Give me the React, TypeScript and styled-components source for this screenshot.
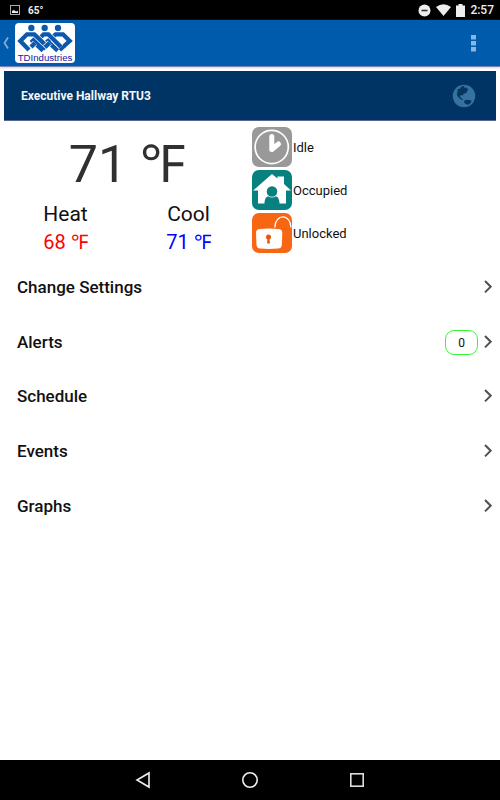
import React from "react";
import styled, { createGlobalStyle } from "styled-components";

const Global = createGlobalStyle`
  * { box-sizing: border-box; }
  body { margin: 0; background: #fff; font-family: Roboto, "Liberation Sans", sans-serif; color: #111; }
  button { font: inherit; color: inherit; background: none; border: 0; padding: 0; cursor: pointer; }
  svg { display: block; }
`;

const Page = styled.div`
  display: flex;
  flex-direction: column;
  min-height: 100vh;
`;

const StatusBar = styled.div`
  display: flex;
  align-items: center;
  height: 20px;
  padding: 0 6px 0 10px;
  background: #000;
  color: #eee;
`;

const Outside = styled.span`
  margin-left: 8px;
  font-size: 10px;
  font-weight: 700;
`;

const StatusIcons = styled.div`
  display: flex;
  align-items: center;
  gap: 5px;
  margin-left: auto;
`;

const Clock = styled.time`
  font-size: 12px;
  font-weight: 500;
`;

const AppBar = styled.header`
  display: flex;
  align-items: center;
  height: 47px;
  padding: 0 20px 0 2px;
  background: #005bac;
  border-bottom: 1px solid #7c80b8;
  box-shadow: 0 1px 2px #ccd3dc;
`;

const BackButton = styled.button`
  width: 13px;
  height: 40px;
`;

const MenuButton = styled.button`
  margin-left: auto;
  width: 13px;
  height: 30px;
  svg { margin: 0 auto; }
`;

const DeviceBar = styled.section`
  display: flex;
  align-items: center;
  justify-content: space-between;
  height: 50px;
  margin: 4px 4px 0;
  padding: 0 20px 0 17px;
  background: #003464;
  border-bottom: 1px solid #5d6390;
`;

const DeviceName = styled.h1`
  margin: 0;
  font-size: 12px;
  font-weight: 700;
  color: #f4f6fa;
`;

const Summary = styled.section`
  display: grid;
  grid-template-columns: 1fr 1fr;
  height: 139px;
  padding: 6px 4px 0;
`;

const Readings = styled.div`
  display: grid;
  grid-template-columns: 1fr 1fr;
  grid-template-rows: 73px 28px 28px;
  text-align: center;
`;

const Current = styled.div`
  grid-column: 1 / -1;
  font-size: 52px;
  line-height: 76px;
  color: #303030;
`;

const Setpoint = styled.div<{ $color?: string }>`
  font-size: ${(p) => (p.$color ? 20 : 21)}px;
  line-height: 28px;
  color: ${(p) => p.$color ?? "#111"};
`;

const States = styled.ul`
  display: flex;
  flex-direction: column;
  gap: 3px;
  margin: 0;
  padding: 0 0 0 2px;
  list-style: none;
`;

const State = styled.li`
  display: flex;
  align-items: center;
  gap: 1px;
  font-size: 13px;
`;

const Menu = styled.nav`
  display: grid;
  grid-auto-rows: 1fr;
  min-height: 273px;
`;

const MenuRow = styled.button`
  display: flex;
  align-items: center;
  gap: 6px;
  padding: 0 8px 0 17px;
  font-size: 17px;
  font-weight: 500;
  text-align: left;
`;

const RowLabel = styled.span`
  flex: 1;
`;

const Badge = styled.span`
  width: 33px;
  height: 25px;
  margin-top: 2px;
  border: 1px solid #3bf53b;
  border-radius: 9px;
  font-size: 12px;
  font-weight: 400;
  line-height: 24px;
  text-align: center;
`;

const SystemNav = styled.nav`
  display: flex;
  align-items: center;
  justify-content: center;
  gap: 83px;
  height: 40px;
  margin-top: auto;
  background: #000;
`;

const NavButton = styled.button`
  width: 24px;
  height: 24px;
`;

const logoLinks = [
  "M84 83L53 54L60 47L92 78",
  "M128 83L98 55L122 34H144L164 54L134 81",
  "M72 48L86 34H100L138 72",
  "M42 81L16 54L36 34H58L98 72",
  "M48 72L60 60",
  "M90 73L104 59",
];

const Logo = () => (
  <svg width="60" height="40" viewBox="0 0 180 120" role="img" aria-label="TDIndustries">
    <rect width="180" height="120" rx="12" fill="#fff" />
    <g fill="#0b58ad">
      <circle cx="49" cy="15" r="9.5" />
      <circle cx="89" cy="15" r="9.5" />
      <circle cx="129" cy="15" r="9.5" />
    </g>
    {logoLinks.map((d) => (
      <g key={d} fill="none">
        <path d={d} stroke="#fff" strokeWidth="17" />
        <path d={d} stroke="#0b58ad" strokeWidth="13" />
      </g>
    ))}
    <text x="90" y="113" textAnchor="middle" fontFamily="Liberation Sans, sans-serif" fontSize="29" fill="#1717a5">TDIndustries</text>
  </svg>
);

const ClockIcon = () => (
  <svg width="40" height="40" viewBox="0 0 40 40" aria-hidden="true">
    <rect width="40" height="40" rx="7" fill="#999" />
    <circle cx="19.7" cy="20" r="16.6" fill="none" stroke="#fff" strokeWidth="1.7" />
    <path d="M19.8 9.5V22.5L26.5 17" fill="none" stroke="#fff" strokeWidth="5" strokeLinecap="round" strokeLinejoin="round" />
  </svg>
);

const HomeIcon = () => (
  <svg width="40" height="40" viewBox="0 0 40 40" aria-hidden="true">
    <rect width="40" height="40" rx="7" fill="#078080" />
    <path d="M20 4L25.5 8.5V6.5H32V14L39 20.5H34V33.5H6V20.5H1Z" fill="#fff" />
    <circle cx="20" cy="21.5" r="5.3" fill="#078080" />
    <path d="M12.5 34C12.5 29 14 26.5 16.5 26.5Q20 28.5 23.5 26.5C26 26.5 27.5 29 27.5 34Z" fill="#078080" />
  </svg>
);

const UnlockIcon = () => (
  <svg width="40" height="40" viewBox="0 0 40 40" aria-hidden="true">
    <rect width="40" height="40" rx="7" fill="#f76612" />
    <path d="M22.8 14.5C23.5 -0.2 38.9 0.8 38.9 14.5" fill="none" stroke="#fff" strokeWidth="1.3" />
    <path d="M8 16Q17 15 26 16Q30.3 16 30.3 20L29.8 32Q29.5 35.5 26 35.5Q17 36.3 8 35.5Q5 35.5 4.5 32L4 20Q4 16 8 16Z" fill="#fff" />
    <circle cx="16.5" cy="24" r="2.5" fill="#e8560c" />
    <path d="M15.5 25H17.5L17.9 30.5H15.1Z" fill="#e8560c" />
  </svg>
);

const Globe = () => (
  <svg width="24" height="24" viewBox="0 0 24 24" aria-hidden="true">
    <circle cx="12" cy="12" r="11.2" fill="#35729f" />
    <path
      d="M5.5 5.5L8 4.5L9.5 2.5L12.5 2L12 4L14 3.5L16.5 5.5L15 7L14.5 9L12 9.5L10.5 11.5L8.5 11L8 13L10 14.5L11.5 16L9 15.5L6.5 13.5L4.8 10.5L5.5 8Z M12.5 16.5L15 15.8L19.5 16.5L19 18.5L17 20.5L14.5 20.5L12 18.5Z"
      fill="#06355f"
    />
  </svg>
);

const Chevron = () => (
  <svg width="8" height="14" viewBox="0 0 8 14" aria-hidden="true">
    <path d="M1 1L6.7 6.7L1 12.4" fill="none" stroke="#505050" strokeWidth="2" />
  </svg>
);

const rows: { label: string; count?: number }[] = [
  { label: "Change Settings" },
  { label: "Alerts", count: 0 },
  { label: "Schedule" },
  { label: "Events" },
  { label: "Graphs" },
];

export default function App() {
  return (
    <Page>
      <Global />
      <StatusBar>
        <svg width="10" height="10" viewBox="0 0 10 10" aria-hidden="true">
          <rect x="0.5" y="0.5" width="9" height="9" fill="none" stroke="#aaa" />
          <path d="M2 8V6L4 5L6 6.5L8 6V8Z" fill="#eee" />
        </svg>
        <Outside>65°</Outside>
        <StatusIcons>
          <svg width="13" height="13" viewBox="0 0 13 13" aria-hidden="true">
            <circle cx="6.5" cy="6.5" r="6" fill="#eee" />
            <path d="M3.5 6.5H9.5" stroke="#333" strokeWidth="1.6" />
          </svg>
          <svg width="15" height="12" viewBox="0 0 15 12" aria-hidden="true">
            <path d="M0 3Q7.5 -2.5 15 3L7.5 12Z" fill="#eee" />
          </svg>
          <svg width="9" height="13" viewBox="0 0 9 13" aria-hidden="true">
            <path d="M0 1.5H2.5V0H6.5V1.5H9V13H0Z" fill="#eee" />
          </svg>
          <Clock>2:57</Clock>
        </StatusIcons>
      </StatusBar>
      <AppBar>
        <BackButton aria-label="Back">
          <svg width="8" height="40" viewBox="0 0 8 40" aria-hidden="true">
            <path d="M6 14.5L2.5 20L6 25.5" fill="none" stroke="#7eacd8" strokeWidth="1.8" />
          </svg>
        </BackButton>
        <Logo />
        <MenuButton aria-label="More options">
          <svg width="5" height="17" viewBox="0 0 5 17" aria-hidden="true">
            <path d="M0 0H5V4.5H0ZM0 6H5V10.5H0ZM0 12H5V16.5H0Z" fill="#8cb6dd" />
          </svg>
        </MenuButton>
      </AppBar>
      <DeviceBar>
        <DeviceName>Executive Hallway RTU3</DeviceName>
        <button aria-label="Web"><Globe /></button>
      </DeviceBar>
      <Summary>
        <Readings>
          <Current>71 ℉</Current>
          <Setpoint>Heat</Setpoint>
          <Setpoint>Cool</Setpoint>
          <Setpoint $color="#f00">68 ℉</Setpoint>
          <Setpoint $color="#00f">71 ℉</Setpoint>
        </Readings>
        <States>
          <State><ClockIcon />Idle</State>
          <State><HomeIcon />Occupied</State>
          <State><UnlockIcon />Unlocked</State>
        </States>
      </Summary>
      <Menu>
        {rows.map((row) => (
          <MenuRow key={row.label}>
            <RowLabel>{row.label}</RowLabel>
            {row.count !== undefined && <Badge>{row.count}</Badge>}
            <Chevron />
          </MenuRow>
        ))}
      </Menu>
      <SystemNav>
        <NavButton aria-label="Back">
          <svg width="24" height="24" viewBox="0 0 24 24" aria-hidden="true">
            <path d="M18 5V19L6 12Z" fill="none" stroke="#eee" strokeWidth="1.6" />
          </svg>
        </NavButton>
        <NavButton aria-label="Home">
          <svg width="24" height="24" viewBox="0 0 24 24" aria-hidden="true">
            <circle cx="12" cy="12" r="7.2" fill="none" stroke="#eee" strokeWidth="1.6" />
          </svg>
        </NavButton>
        <NavButton aria-label="Recent apps">
          <svg width="24" height="24" viewBox="0 0 24 24" aria-hidden="true">
            <rect x="5.8" y="5.8" width="12.4" height="12.4" fill="none" stroke="#ddd" strokeWidth="1.6" />
          </svg>
        </NavButton>
      </SystemNav>
    </Page>
  );
}
